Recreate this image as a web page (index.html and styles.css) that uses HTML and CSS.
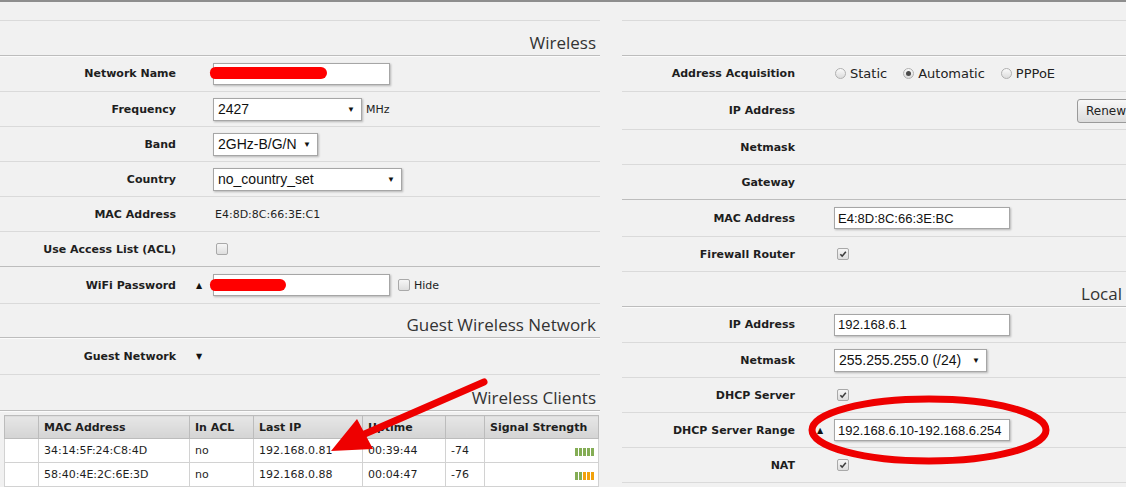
FILE: index.html
```html
<!DOCTYPE html>
<html lang="en">
<head>
<meta charset="utf-8">
<meta name="viewport" content="width=device-width, initial-scale=1.0">
<title>Wireless / Network</title>
<link rel="stylesheet" href="styles.css">
</head>
<body>
<div class="page">

  <div class="col left">
    <div class="blank"></div>
    <div class="head">Wireless</div>

    <div class="row h36">
      <div class="lbl">Network Name</div>
      <div class="val"><span class="field"><input class="txt w177" type="text" value=""><span class="redact r1"></span></span></div>
    </div>
    <div class="row">
      <div class="lbl">Frequency</div>
      <div class="val"><div class="sel w149"><span>2427</span><span class="arr">&#9660;</span></div><span class="unit">MHz</span></div>
    </div>
    <div class="row">
      <div class="lbl">Band</div>
      <div class="val"><div class="sel w105"><span>2GHz-B/G/N</span><span class="arr">&#9660;</span></div></div>
    </div>
    <div class="row">
      <div class="lbl">Country</div>
      <div class="val"><div class="sel w189"><span>no_country_set</span><span class="arr">&#9660;</span></div></div>
    </div>
    <div class="row">
      <div class="lbl">MAC Address</div>
      <div class="val plain">E4:8D:8C:66:3E:C1</div>
    </div>
    <div class="row sect">
      <div class="lbl">Use Access List (ACL)</div>
      <div class="val"><span class="cb"></span></div>
    </div>
    <div class="row h37">
      <div class="lbl">WiFi Password</div>
      <div class="val"><span class="toggle">&#9650;</span><span class="field"><input class="txt w177" type="text" value=""><span class="redact r2"></span></span><span class="cb hide"></span><span class="cbtext">Hide</span></div>
    </div>

    <div class="head h34">Guest Wireless Network</div>
    <div class="row h37">
      <div class="lbl">Guest Network</div>
      <div class="val"><span class="toggle">&#9660;</span></div>
    </div>

    <div class="head h36">Wireless Clients</div>
    <table class="clients">
      <colgroup>
        <col style="width:34px"><col style="width:151px"><col style="width:64px"><col style="width:109px"><col style="width:83px"><col style="width:39px"><col style="width:114px">
      </colgroup>
      <tr><th></th><th>MAC Address</th><th>In ACL</th><th>Last IP</th><th>Uptime</th><th></th><th>Signal Strength</th></tr>
      <tr><td></td><td>34:14:5F:24:C8:4D</td><td>no</td><td>192.168.0.81</td><td>00:39:44</td><td>-74</td><td class="sig"><span class="bars"><i class="g"></i><i class="g"></i><i class="g"></i><i class="g"></i><i class="g"></i></span></td></tr>
      <tr><td></td><td>58:40:4E:2C:6E:3D</td><td>no</td><td>192.168.0.88</td><td>00:04:47</td><td>-76</td><td class="sig"><span class="bars"><i class="g"></i><i class="g"></i><i class="o"></i><i class="o"></i><i class="o"></i></span></td></tr>
    </table>
  </div>

  <div class="col right">
    <div class="blank"></div>
    <div class="head"></div>

    <div class="row h36">
      <div class="lbl">Address Acquisition</div>
      <div class="val radios">
        <span class="rd"></span><span class="rtext">Static</span>
        <span class="rd on"></span><span class="rtext">Automatic</span>
        <span class="rd"></span><span class="rtext">PPPoE</span>
      </div>
    </div>
    <div class="row h38">
      <div class="lbl">IP Address</div>
      <div class="val end"><button class="btn" type="button">Renew</button></div>
    </div>
    <div class="row">
      <div class="lbl">Netmask</div>
      <div class="val"></div>
    </div>
    <div class="row sect">
      <div class="lbl">Gateway</div>
      <div class="val"></div>
    </div>
    <div class="row h37">
      <div class="lbl">MAC Address</div>
      <div class="val"><input class="txt w176" type="text" value="E4:8D:8C:66:3E:BC"></div>
    </div>
    <div class="row">
      <div class="lbl">Firewall Router</div>
      <div class="val"><span class="cb on"><svg viewBox="0 0 12 12"><path d="M2.8 6.3 L5 8.6 L9.4 3.4"/></svg></span></div>
    </div>

    <div class="head">Local</div>
    <div class="row h36">
      <div class="lbl">IP Address</div>
      <div class="val"><input class="txt w176" type="text" value="192.168.6.1"></div>
    </div>
    <div class="row">
      <div class="lbl">Netmask</div>
      <div class="val"><div class="sel w153"><span>255.255.255.0 (/24)</span><span class="arr">&#9660;</span></div></div>
    </div>
    <div class="row">
      <div class="lbl">DHCP Server</div>
      <div class="val"><span class="cb on"><svg viewBox="0 0 12 12"><path d="M2.8 6.3 L5 8.6 L9.4 3.4"/></svg></span></div>
    </div>
    <div class="row">
      <div class="lbl">DHCP Server Range</div>
      <div class="val"><span class="toggle">&#9650;</span><input class="txt w176" type="text" value="192.168.6.10-192.168.6.254"></div>
    </div>
    <div class="row">
      <div class="lbl">NAT</div>
      <div class="val"><span class="cb on"><svg viewBox="0 0 12 12"><path d="M2.8 6.3 L5 8.6 L9.4 3.4"/></svg></span></div>
    </div>
  </div>

</div>

<!-- hand drawn marks on top of the screenshot -->
<svg class="marks" width="1126" height="487" viewBox="0 0 1126 487">
  <line x1="484" y1="382" x2="360" y2="436" stroke="#ee0000" stroke-width="7" stroke-linecap="round"/>
  <polygon points="331,451 357,419 373,449" fill="#ee0000"/>
  <ellipse cx="929" cy="430" rx="117" ry="31" fill="none" stroke="#ee0000" stroke-width="7"/>
</svg>
</body>
</html>
```

FILE: styles.css
```css
* {
    box-sizing: border-box;
}

body {
    margin: 0;
    background: #f1f1f1;
    border-top: 2px solid #8e8e8e;
    overflow: hidden;
    font-family: "DejaVu Sans", Verdana, sans-serif;
    font-size: 11px;
    color: #1e1e1e;
}

.page {
    display: flex;
    gap: 22px;
    width: 1140px;
}

.left {
    width: 600px;
}

.right {
    width: 515px;
}

.blank {
    height: 19px;
    border-bottom: 1px solid #dadada;
}

.head {
    height: 35px;
    display: flex;
    align-items: flex-end;
    justify-content: flex-end;
    padding: 0 4px 1px 0;
    font-family: "Open Sans", sans-serif;
    font-size: 17px;
    line-height: 22px;
    color: #333;
    border-bottom: 1px solid #bdbdbd;
    box-shadow: 0 1px 0 #fbfbfb;
}

.right .head {
    padding-right: 15px;
}

.row {
    display: grid;
    grid-template-columns: 176px 1fr;
    column-gap: 37px;
    align-items: center;
    height: 35px;
    border-bottom: 1px solid #dadada;
}

.right .row {
    grid-template-columns: 173px 1fr;
    column-gap: 39px;
}

.row.sect {
    border-bottom-color: #bdbdbd;
}

.h34 { height: 34px; }
.h36 { height: 36px; }
.h37 { height: 37px; }
.h38 { height: 38px; }

.lbl {
    text-align: right;
    font-weight: bold;
}

.val {
    display: flex;
    align-items: center;
}

.val.end {
    justify-content: flex-end;
}

.plain {
    padding-left: 2px;
}

.field {
    position: relative;
    display: inline-block;
}

.txt {
    height: 22px;
    margin: 0;
    padding: 0 3px;
    border: 1px solid #a6a6a6;
    background: #fff;
    box-shadow: 1px 1px 2px rgba(0, 0, 0, 0.25);
    font-family: "Liberation Sans", Arial, sans-serif;
    font-size: 13px;
    color: #111;
    outline: none;
}

.w176 { width: 176px; }
.w177 { width: 177px; }

.redact {
    position: absolute;
    left: -3px;
    top: 5px;
    height: 12px;
    background: #ff0000;
    border-radius: 6px 7px 7px 6px;
}

.r1 { width: 117px; top: 4px; }
.r2 { width: 76px; }

.sel {
    display: flex;
    align-items: center;
    justify-content: space-between;
    height: 23px;
    padding: 0 6px 0 4px;
    border: 1px solid #a6a6a6;
    background: #fff;
    box-shadow: 1px 1px 2px rgba(0, 0, 0, 0.25);
    font-family: "Liberation Sans", Arial, sans-serif;
    font-size: 14px;
    color: #111;
}

.sel .arr {
    font-size: 8px;
    color: #111;
}

.w105 { width: 105px; }
.w149 { width: 149px; }
.w153 { width: 153px; }
.w189 { width: 189px; }

.unit {
    margin-left: 4px;
}

.toggle {
    display: inline-block;
    width: 17px;
    margin-left: -17px;
    font-size: 8px;
    color: #111;
}

.cb {
    display: inline-block;
    width: 12px;
    height: 12px;
    margin-left: 3px;
    border: 1px solid #a9a9a9;
    border-radius: 2px;
    background: linear-gradient(#f6f6f6, #dedede);
}

.cb svg {
    display: block;
    width: 10px;
    height: 10px;
}

.cb svg path {
    fill: none;
    stroke: #3c3c3c;
    stroke-width: 1.9;
}

.cb.hide {
    margin-left: 8px;
}

.cbtext {
    margin-left: 4px;
}

.radios {
    font-size: 13px;
    color: #222;
}

.rd {
    display: inline-block;
    width: 11px;
    height: 11px;
    margin-left: 1px;
    border: 1px solid #b0b0b0;
    border-radius: 50%;
    background: linear-gradient(#fafafa, #dcdcdc);
    position: relative;
}

.rd.on::after {
    content: "";
    position: absolute;
    left: 2px;
    top: 2px;
    width: 5px;
    height: 5px;
    border-radius: 50%;
    background: #4a4a4a;
}

.rtext {
    margin: 0 15px 0 4px;
}

.btn {
    width: 60px;
    height: 24px;
    border: 1px solid #9a9a9a;
    border-radius: 3px;
    background: linear-gradient(#f8f8f8, #dcdcdc);
    font-family: "DejaVu Sans", Verdana, sans-serif;
    font-size: 12px;
    color: #222;
    padding: 0 0 0 8px;
    text-align: left;
}

.clients {
    margin: 4px 0 0 4px;
    width: 594px;
    table-layout: fixed;
    border-collapse: collapse;
    border: 1px solid #a4a4a4;
    background: #fff;
}

.clients th {
    height: 23px;
    padding: 0 5px;
    text-align: left;
    font-weight: bold;
    background: linear-gradient(#e6e6e6, #d4d4d4);
    border: 1px solid #bcbcbc;
}

.clients td {
    height: 24px;
    padding: 0 5px;
    border: 1px solid #d2d2d2;
    white-space: nowrap;
}

.clients td.sig {
    text-align: right;
    vertical-align: bottom;
    padding: 0 4px 3px 0;
}

.bars {
    display: inline-flex;
    gap: 1px;
}

.bars i {
    display: block;
    width: 3px;
    height: 8px;
}

.bars .g { background: #84ad55; }
.bars .o { background: #f2a20c; }

.marks {
    position: absolute;
    left: 0;
    top: 0;
    pointer-events: none;
}
```
